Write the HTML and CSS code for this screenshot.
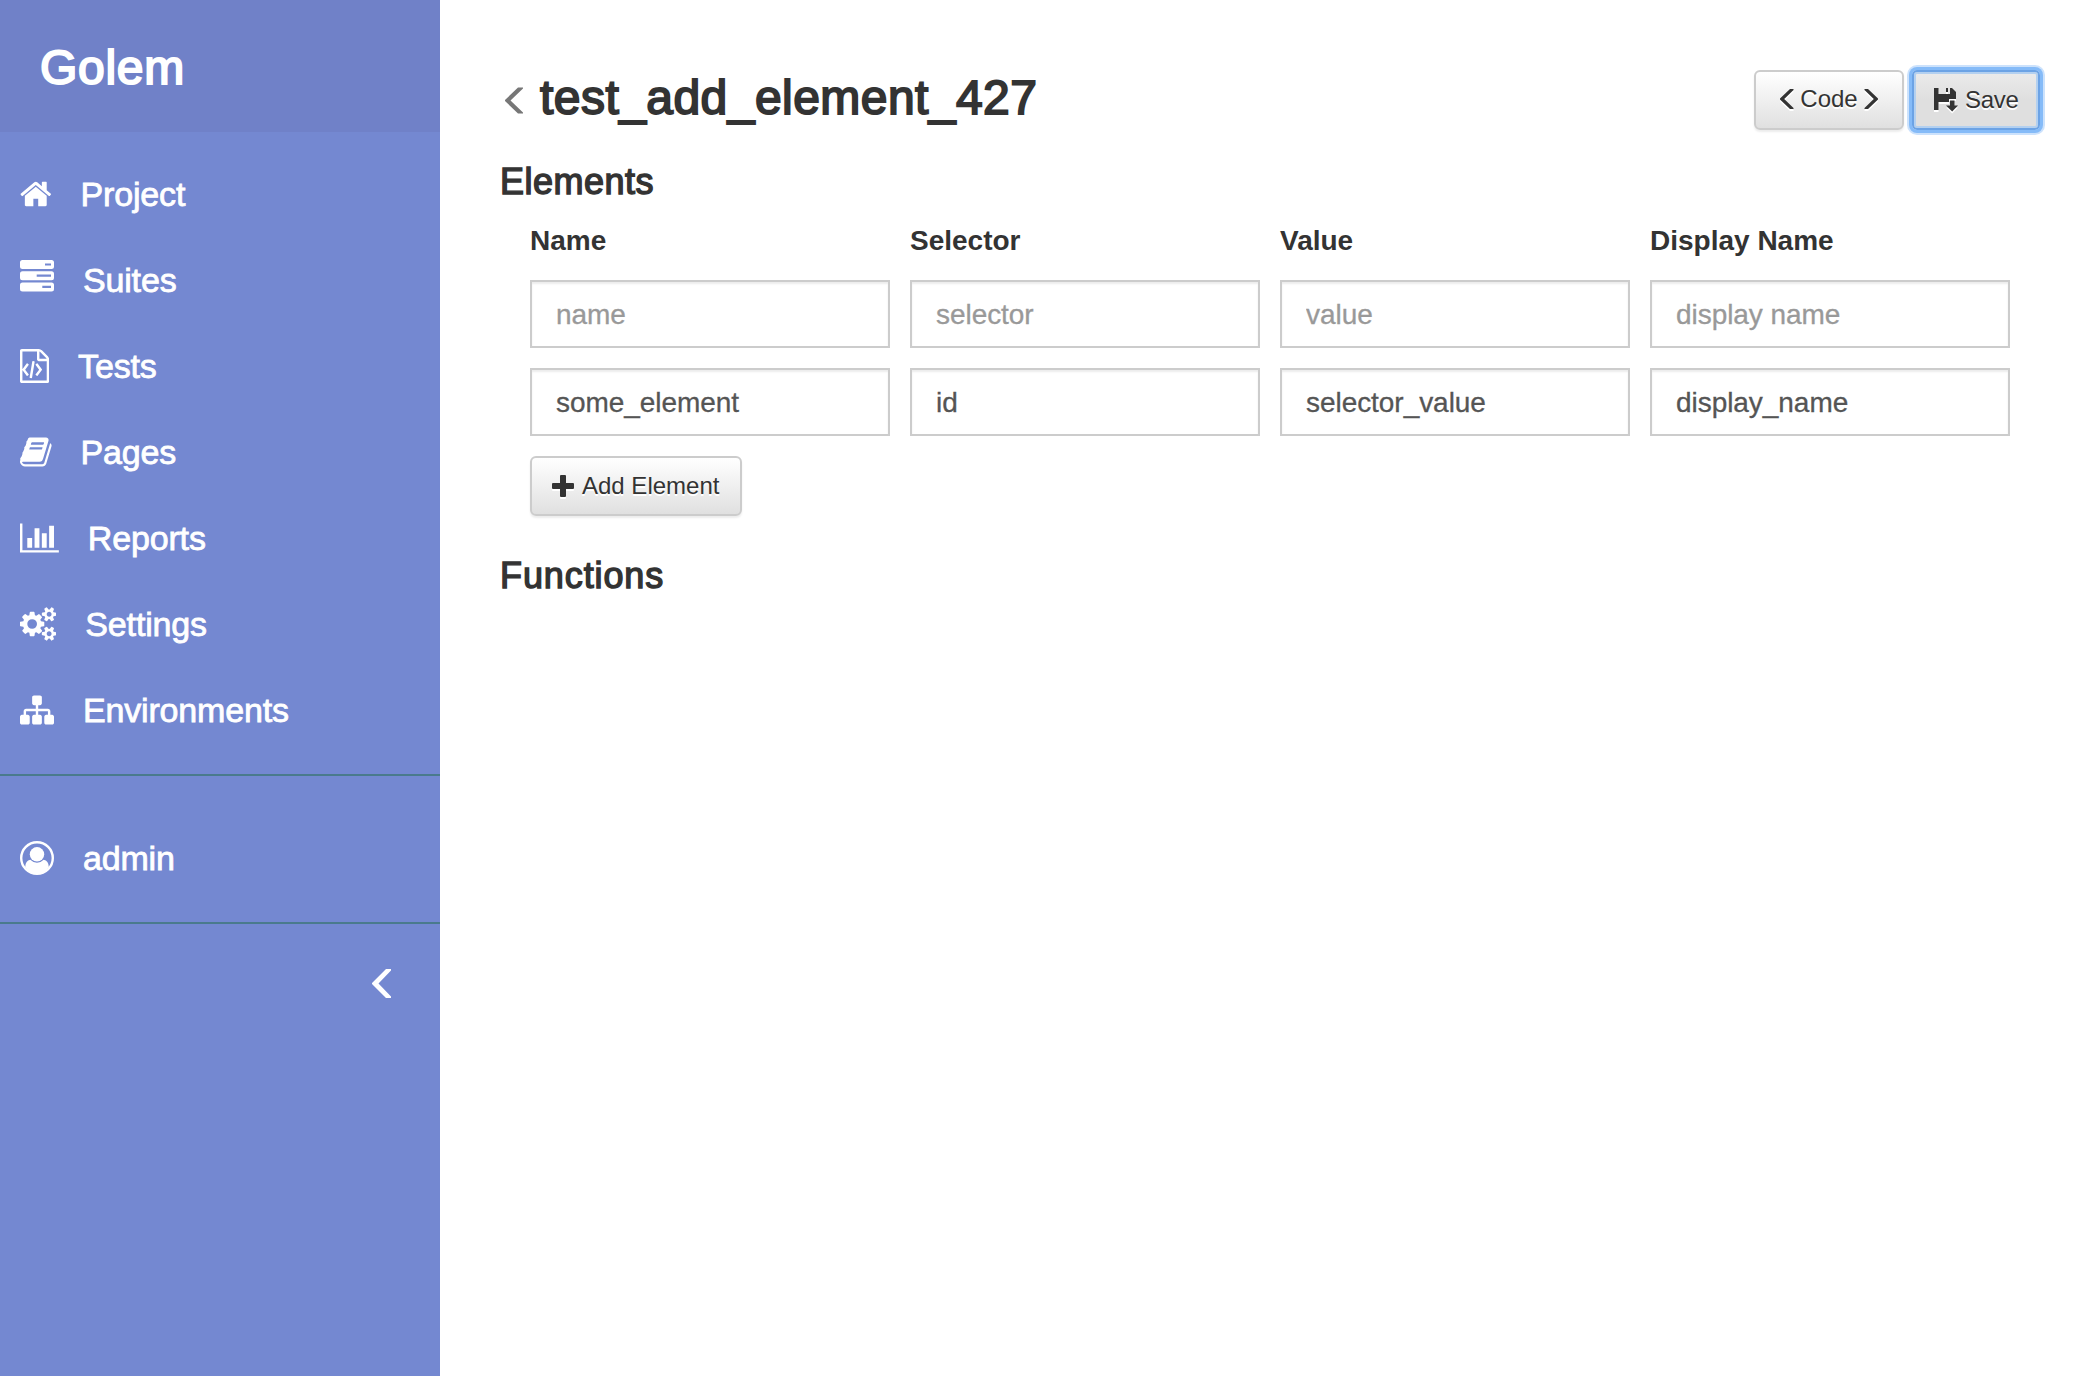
FILE: index.html
```html
<!DOCTYPE html>
<html lang="en">
<head>
<meta charset="utf-8">
<title>Golem</title>
<link rel="stylesheet" href="styles.css">
</head>
<body>
<aside class="sidebar">
  <header class="brand">Golem</header>
  <nav class="group">
    <a class="item"><svg class="icon" viewBox="64 0 1664 1792"><path d="M1472 992v480q0 26-19 45t-45 19h-384v-384h-256v384h-384q-26 0-45-19t-19-45v-480q0-1 .5-3t.5-3l575-474 575 474q1 2 1 6zm223-69l-62 74q-8 9-21 11h-3q-13 0-21-7l-692-577-692 577q-12 8-24 7-13-2-21-11l-62-74q-8-10-7-23.5t11-21.5l719-599q32-26 76-26t76 26l244 204v-195q0-14 9-23t23-9h192q14 0 23 9t9 23v408l219 182q10 8 11 21.5t-7 23.5z"/></svg><span>Project</span></a>
    <a class="item"><svg class="icon icon-raised" viewBox="0 0 34 34"><path fill-rule="evenodd" d="M2.500 1H31.500Q34 1 34 3.500V7.500Q34 10 31.500 10H2.500Q0 10 0 7.500V3.500Q0 1 2.500 1ZM25 4.400V6.600H31V4.400ZM2.500 12.200H31.500Q34 12.200 34 14.700V18.700Q34 21.200 31.500 21.200H2.500Q0 21.200 0 18.700V14.700Q0 12.200 2.500 12.200ZM16.700 15.600V17.800H31V15.600ZM2.500 23.400H31.500Q34 23.400 34 25.900V29.900Q34 32.400 31.500 32.400H2.500Q0 32.400 0 29.900V25.900Q0 23.400 2.500 23.400ZM22.300 26.800V29H31V26.800Z"/></svg><span>Suites</span></a>
    <a class="item"><svg class="icon" viewBox="128 0 1536 1792"><path d="M1596 380q28 28 48 76t20 88v1152q0 40-28 68t-68 28h-1344q-40 0-68-28t-28-68v-1600q0-40 28-68t68-28h896q40 0 88 20t76 48zm-444-244v376h376q-10-29-22-41l-313-313q-12-12-41-22zm384 1528v-1024h-416q-40 0-68-28t-28-68v-416h-768v1536h1280zm-1056-896q8-11 21-12.5t24 6.5l51 38q11 8 12.5 21t-6.5 24l-182 243 182 243q8 11 6.5 24t-12.5 21l-51 38q-11 8-24 6.5t-21-12.5l-226-301q-14-19 0-38zm802 301q14 19 0 38l-226 301q-8 11-21 12.5t-24-6.5l-51-38q-11-8-12.500-21t6.500-24l182-243-182-243q-8-11-6.500-24t12.500-21l51-38q11-8 24-6.500t21 12.500zm-620 461q-13-2-20.500-13t-5.500-24l138-831q2-13 13-20.500t24-5.500l63 10q13 2 20.500 13t5.500 24l-138 831q-2 13-13 20.500t-24 5.500z"/></svg><span>Tests</span></a>
    <a class="item"><svg class="icon" viewBox="64 0 1664 1792"><path d="M1703 478q40 57 18 129l-275 906q-19 64-76.500 107.500t-122.500 43.500h-923q-77 0-148.500-53.500t-99.500-131.500q-24-67-2-127 0-4 3-27t4-37q1-8-3-21.500t-3-19.500q2-11 8-21t16.500-23.500 16.500-23.500q23-38 45-91.500t30-91.500q3-10 .5-30t-.5-28q3-11 17-28t17-23q21-36 42-92t25-90q1-9-2.500-32t.5-28q4-13 22-30.500t22-22.500q19-26 42.500-84.500t27.500-96.500q1-8-3-25.500t-2-26.500q2-8 9-18t18-23 17-21q8-12 16.500-30.500t15-35 16-36 19.500-32 26.500-23.500 36-11.500 47.500 5.500l-1 3q38-9 51-9h761q74 0 114 56t18 130l-274 906q-36 119-71.500 153.500t-128.500 34.500h-869q-27 0-38 15-11 16-1 43 24 70 144 70h923q29 0 56-15.500t35-41.500l300-987q7-22 5-57 38 15 59 43zm-1064 2q-4 13 2 22.500t20 9.500h608q13 0 25.500-9.500t16.500-22.500l21-64q4-13-2-22.500t-20-9.500h-608q-13 0-25.500 9.500t-16.500 22.500zm-83 256q-4 13 2 22.500t20 9.500h608q13 0 25.500-9.500t16.500-22.500l21-64q4-13-2-22.500t-20-9.500h-608q-13 0-25.500 9.500t-16.500 22.500z"/></svg><span>Pages</span></a>
    <a class="item"><svg class="icon" viewBox="0 0 2048 1792"><path d="M640 896v512h-256v-512h256zm384-512v1024h-256v-1024h256zm1024 1152v128h-2048v-1536h128v1408h1920zm-640-896v768h-256v-768h256zm384-384v1152h-256v-1152h256z"/></svg><span>Reports</span></a>
    <a class="item"><svg class="icon" viewBox="0 0 1920 1792"><path d="M896 896q0-106-75-181t-181-75-181 75-75 181 75 181 181 75 181-75 75-181zm768 512q0-52-38-90t-90-38-90 38-38 90q0 53 37.500 90.500t90.500 37.500 90.500-37.500 37.500-90.500zm0-1024q0-52-38-90t-90-38-90 38-38 90q0 53 37.500 90.500t90.500 37.500 90.500-37.500 37.500-90.500zm-384 421v185q0 10-7 19.500t-16 10.500l-155 24q-11 35-32 76 34 48 90 115 7 11 7 20 0 12-7 19-23 30-82.500 89.500t-78.500 59.500q-11 0-21-7l-115-90q-37 19-77 31-11 108-23 155-7 24-30 24h-186q-11 0-20-7.500t-10-17.500l-23-153q-34-10-75-31l-118 89q-7 7-20 7-11 0-21-8-144-133-144-160 0-9 7-19 10-14 41-53t47-61q-23-44-35-82l-152-24q-10-1-17-9.500t-7-19.500v-185q0-10 7-19.500t16-10.500l155-24q11-35 32-76-34-48-90-115-7-11-7-20 0-12 7-20 22-30 82-89t79-59q11 0 21 7l115 90q34-18 77-32 11-108 23-154 7-24 30-24h186q11 0 20 7.500t10 17.500l23 153q34 10 75 31l118-89q8-7 20-7 11 0 21 8 144 133 144 160 0 9-7 19-12 16-42 54t-45 60q23 48 34 82l152 23q10 2 17 10.500t7 19.500zm640 533v140q0 16-149 31-12 27-30 52 51 113 51 138 0 4-4 7-122 71-124 71-8 0-46-47t-52-68q-20 2-30 2t-30-2q-14 21-52 68t-46 47q-2 0-124-71-4-3-4-7 0-25 51-138-18-25-30-52-149-15-149-31v-140q0-16 149-31 13-29 30-52-51-113-51-138 0-4 4-7 4-2 35-20t59-34 30-16q8 0 46 46.500t52 67.500q20-2 30-2t30 2q51-71 92-112l6-2q4 0 124 70 4 3 4 7 0 25-51 138 17 23 30 52 149 15 149 31zm0-1024v140q0 16-149 31-12 27-30 52 51 113 51 138 0 4-4 7-122 71-124 71-8 0-46-47t-52-68q-20 2-30 2t-30-2q-14 21-52 68t-46 47q-2 0-124-71-4-3-4-7 0-25 51-138-18-25-30-52-149-15-149-31v-140q0-16 149-31 13-29 30-52-51-113-51-138 0-4 4-7 4-2 35-20t59-34 30-16q8 0 46 46.500t52 67.500q20-2 30-2t30 2q51-71 92-112l6-2q4 0 124 70 4 3 4 7 0 25-51 138 17 23 30 52 149 15 149 31z"/></svg><span>Settings</span></a>
    <a class="item"><svg class="icon" viewBox="0 0 1792 1792"><path d="M1792 1248v320q0 40-28 68t-68 28h-320q-40 0-68-28t-28-68v-320q0-40 28-68t68-28h96v-192h-512v192h96q40 0 68 28t28 68v320q0 40-28 68t-68 28h-320q-40 0-68-28t-28-68v-320q0-40 28-68t68-28h96v-192h-512v192h96q40 0 68 28t28 68v320q0 40-28 68t-68 28h-320q-40 0-68-28t-28-68v-320q0-40 28-68t68-28h96v-192q0-52 38-90t90-38h512v-192h-96q-40 0-68-28t-28-68v-320q0-40 28-68t68-28h320q40 0 68 28t28 68v320q0 40-28 68t-68 28h-96v192h512q52 0 90 38t38 90v192h96q40 0 68 28t28 68z"/></svg><span>Environments</span></a>
  </nav>
  <div class="group group-user">
    <a class="item"><svg class="icon" viewBox="0 0 34 34"><circle cx="17" cy="17" r="15.800" fill="none" stroke="#fff" stroke-width="2.400"/><circle cx="17" cy="13.300" r="7.200"/><path d="M10.300 18.800Q13 21.700 17 21.700T23.700 18.800Q28.500 19.500 28.800 26A15.800 15.800 0 0 1 17 32.800A15.800 15.800 0 0 1 5.200 26Q5.500 19.500 10.300 18.800Z"/></svg><span>admin</span></a>
  </div>
  <div class="collapse"><svg width="20" height="29" viewBox="0 0 20 29"><path d="M14 0H19V1.500L6.500 14.500L19 27.500V29H14L0 15V14Z"/></svg></div>
</aside>
<main class="main">
  <div class="titlebar">
    <svg class="back" width="18" height="27" viewBox="0 0 18 27"><path d="M13 .5H18V1.500L5.500 13.500L18 25.500V26.500H13L0 14V13Z"/></svg>
    <h1 class="title">test_add_element_427</h1>
    <button class="btn btn-code"><svg width="14" height="20" viewBox="0 0 14 20"><path d="M10 0H13.500V1L4.200 10L13.500 19V20H10L0 10.500V9.500Z"/></svg>Code<svg width="14" height="20" viewBox="0 0 14 20"><path d="M4 0H.5V1L9.800 10L.5 19V20H4L14 10.500V9.500Z"/></svg></button>
    <button class="btn btn-save"><svg width="24" height="24" viewBox="0 0 24 24"><path fill-rule="evenodd" d="M0 0H4.500V6H16V0H18L22 4V11H15V14H4.500V22H0ZM12 0H14V4H12ZM16 12.500H20.500V17.500H24L18.200 23.500L12 17.500H16Z"/></svg>Save</button>
  </div>
  <h2 class="section">Elements</h2>
  <form class="elements">
    <label class="label">Name</label><label class="label">Selector</label><label class="label">Value</label><label class="label">Display Name</label>
    <input class="field" placeholder="name"><input class="field" placeholder="selector"><input class="field" placeholder="value"><input class="field" placeholder="display name">
    <input class="field" value="some_element"><input class="field" value="id"><input class="field" value="selector_value"><input class="field" value="display_name">
    <button type="button" class="btn btn-add"><svg width="22" height="22" viewBox="0 0 22 22"><path d="M9 0H13Q14 0 14 1V8H21Q22 8 22 9V13Q22 14 21 14H14V21Q14 22 13 22H9Q8 22 8 21V14H1Q0 14 0 13V9Q0 8 1 8H8V1Q8 0 9 0Z"/></svg>Add Element</button>
  </form>
  <h2 class="section section-functions">Functions</h2>
</main>
</body>
</html>
```
FILE: styles.css
```css
* { box-sizing: border-box; }
body {
  margin: 0;
  display: flex;
  min-height: 1376px;
  background: #fff;
  color: #333;
  font-family: "Liberation Sans", Arial, sans-serif;
  font-size: 28px;
}
svg { display: block; flex: none; fill: currentColor; }

.sidebar { width: 440px; flex: none; background: #7488d1; color: #fff; }
.brand {
  height: 132px;
  padding: 3px 0 0 40px;
  line-height: 129px;
  background: #7081c8;
  font-size: 48px;
  letter-spacing: .7px;
  -webkit-text-stroke: 2px #fff;
}
.group { padding: 19px 0 21px; border-bottom: 2px solid #4a7a8c; }
.group-user { padding-top: 39px; }
.item {
  display: flex;
  align-items: center;
  gap: 28.9px;
  height: 86px;
  padding-left: 20px;
  font-size: 34px;
  letter-spacing: -.15px;
  -webkit-text-stroke: .8px #fff;
}
.icon { height: 34px; width: auto; stroke: none; }
.icon-raised { margin-bottom: 8px; }
.collapse { display: flex; justify-content: flex-end; padding: 45px 48px 0 0; }

.main { flex: 1; padding: 70px 60px 0; }
.titlebar { display: flex; align-items: center; height: 60px; }
.back { margin: 0 17px 0 5px; color: #777; }
.title {
  flex: 1;
  margin: 0;
  padding-bottom: 5px;
  font-size: 48px;
  font-weight: 400;
  letter-spacing: .45px;
  -webkit-text-stroke: 1.9px #333;
}
.section {
  margin: 32px 0 0;
  font-size: 36px;
  font-weight: 400;
  line-height: 40px;
  letter-spacing: .5px;
  -webkit-text-stroke: 1.4px #333;
}
.section-functions { margin-top: 40px; letter-spacing: .9px; }
.elements {
  display: grid;
  grid-template-columns: 360px 350px 350px 360px;
  gap: 20px;
  padding: 18px 30px 0;
}
.label { height: 40px; padding-top: 1px; line-height: 40px; font-weight: 700; }
.field {
  width: 100%;
  height: 68px;
  padding: 1px 24px 0;
  border: 2px solid #ccc;
  border-radius: 0;
  background: #fff;
  box-shadow: inset 0 2px 2px rgba(0, 0, 0, .075);
  color: #555;
  font: inherit;
  letter-spacing: -.05px;
  -webkit-text-stroke: .3px currentColor;
}
.field::placeholder { color: #999; opacity: 1; }

.btn {
  display: flex;
  align-items: center;
  height: 60px;
  padding: 0 20px;
  border: 2px solid #ccc;
  border-radius: 6px;
  background: linear-gradient(#fff, #e0e0e0);
  box-shadow: inset 0 2px 0 rgba(255, 255, 255, .15), 0 2px 2px rgba(0, 0, 0, .075);
  color: #333;
  font: 24px "Liberation Sans", Arial, sans-serif;
  white-space: nowrap;
  text-shadow: 0 2px 0 #fff;
}
.btn svg { filter: drop-shadow(0 2px 0 #fff); }
.btn-code { width: 150px; padding-bottom: 2px; justify-content: center; gap: 6px; margin-right: 8px; }
.btn-save {
  width: 128px;
  gap: 7px;
  letter-spacing: -.3px;
  border-color: #6ca3e5;
  border-radius: 5px;
  background: linear-gradient(#ebebeb, #dfdfdf 50%);
  box-shadow: inset 0 0 0 2px #b3d0f0, 0 0 0 3px #85bbf8, 0 0 0 5px #cce2fc;
}
.btn-add { width: 212px; gap: 8px; }
```
